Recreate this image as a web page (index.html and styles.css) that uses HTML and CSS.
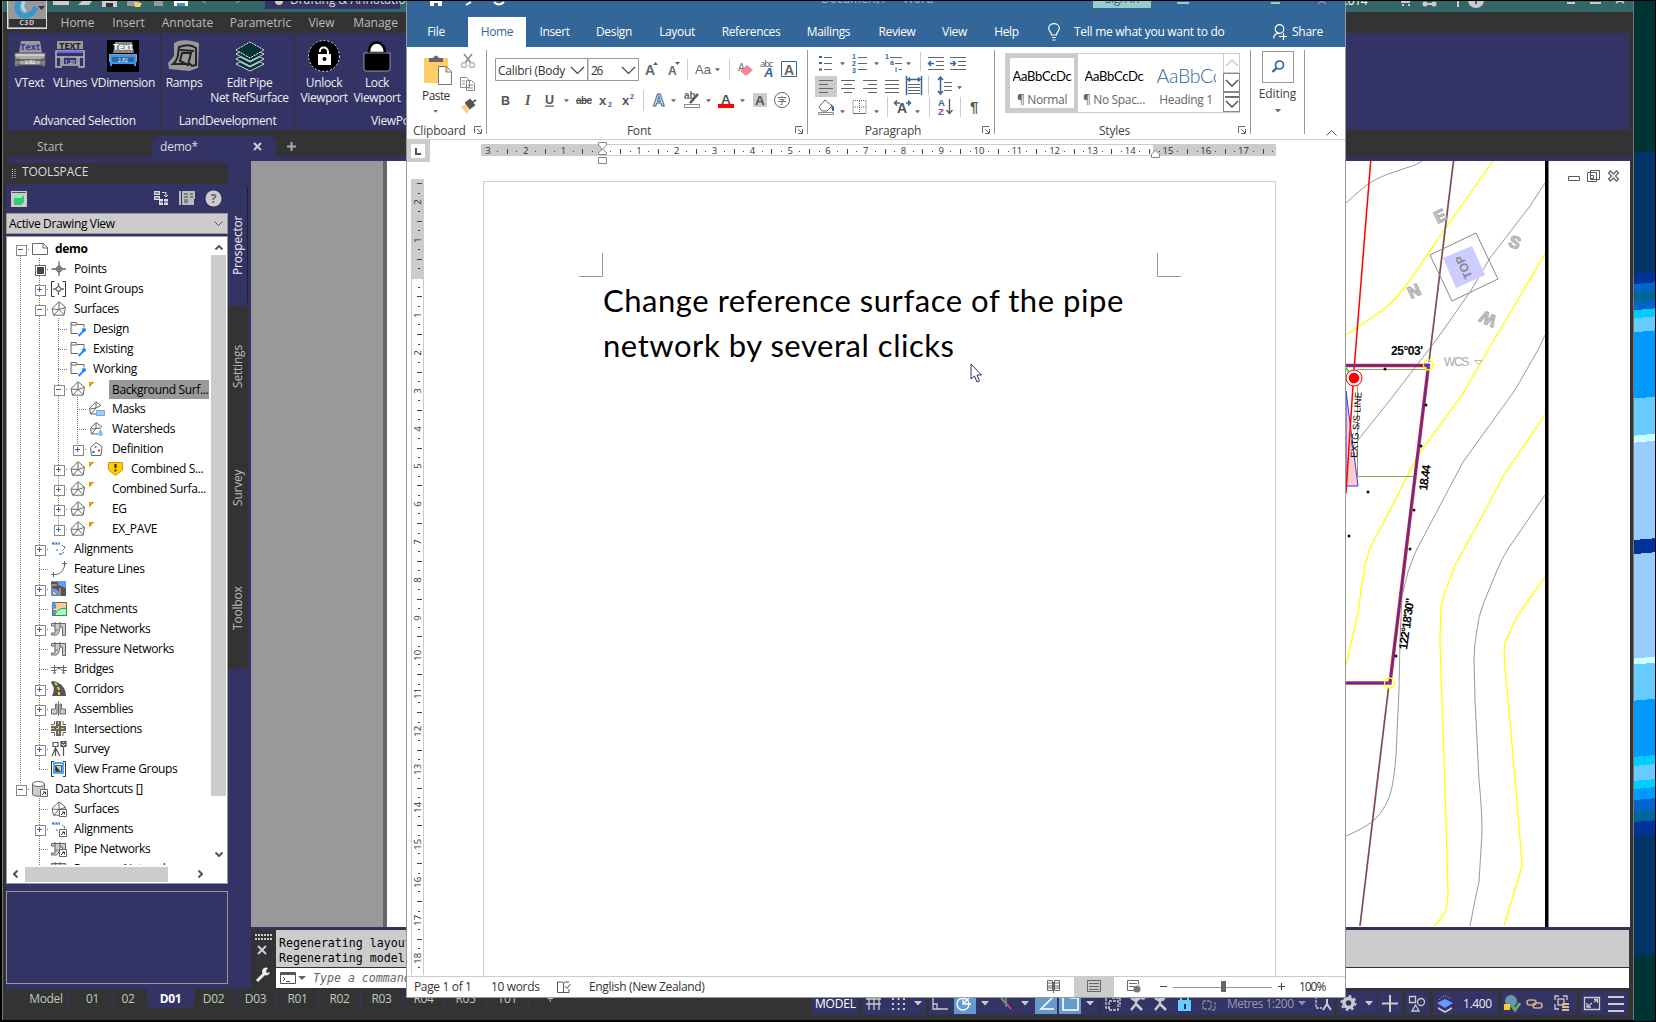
FILE: index.html
```html
<!DOCTYPE html>
<html lang="en">
<head>
<meta charset="utf-8">
<title>Document1 - Word</title>
<link rel="stylesheet" href="styles.css">
</head>
<body>
<svg class="defs" width="0" height="0">
  <defs>
    <symbol id="surf" viewBox="0 0 16 16"><path d="M1 7.500 8 .7l6.500 5.500-1.500 8H2.500zM8 1v7M1.500 8 8 8.500l6-2M8 8.500 3 14M8 8.500l5 5" fill="none" stroke="#666"/></symbol>
    <symbol id="folder" viewBox="0 0 16 16"><path d="M1 12.500v-11h5l1 2h7v3M1 12.500h7M1 4h6" fill="none" stroke="#666"/><path d="m8.500 15 5-5" stroke="#1a8cff" stroke-width="2"/><circle cx="14" cy="9" r="2" fill="#1a8cff"/></symbol>
    <symbol id="doc" viewBox="0 0 16 16"><path d="M.5 2.500h11l4 4v7H.5zM11 2.500V7h4.500" fill="#fff" stroke="#666"/></symbol>
    <symbol id="point" viewBox="0 0 16 16"><path d="M8 .5v4M8 11v4M.5 8h4M11 8h4M8 4.500 11.500 8 8 11.500 4.500 8zM6 8h4M8 6v4" fill="none" stroke="#666" stroke-width="1.300"/></symbol>
    <symbol id="pgroup" viewBox="0 0 16 16"><path d="M3.500.5h-3v15h3M11.500.5h3v15h-3" fill="none" stroke="#333"/><path d="M7.500 2v3M7.500 11v3M2 8h3M10 8h3M7.500 5l3 3-3 3-3-3z" fill="none" stroke="#666" stroke-width="1.300"/></symbol>
    <symbol id="mask" viewBox="0 0 16 16"><path d="M.5 7.500 7 .8l5 4M.5 7.500 1.500 13H7M7 1v6M1 8l6-1 4-2M7 7l-5 6" fill="none" stroke="#666"/><path d="M7.500 9.500h8v5h-8z" fill="#9cf" stroke="#369" stroke-dasharray="1 1"/></symbol>
    <symbol id="water" viewBox="0 0 16 16"><path d="M1.500 7.500 7 1.500l6 4.500M1.500 7.500 2.500 13H9M7 2v5M2 8l10-1M7 7l-4 6" fill="none" stroke="#666"/><path d="M11.500 8c4 5 2 7 0 7s-4-2 0-7z" fill="#69c9ff"/></symbol>
    <symbol id="defn" viewBox="0 0 16 16"><path d="M1.500 6.500 7 1.500l6 4-1 9H2.500z" fill="none" stroke="#666"/><path d="M5.500 5h2v2h-2z" fill="#3b6"/><path d="M3.500 10h2v2h-2z" fill="#06f"/><path d="M9 8.500h2v2H9z" fill="#c33"/></symbol>
    <symbol id="align" viewBox="0 0 16 16"><path d="M1 2.500h2M5 2.500h1M8 2.500h1" stroke="#666" stroke-width="2"/><path d="M4 1v3M7 1v3M13 5l1 2M13 11l-4 3" stroke="#1a8cff"/><path d="m11 4 3 3-3 3M8 13h2M5 9h2" fill="none" stroke="#666" stroke-dasharray="2 1"/></symbol>
    <symbol id="feat" viewBox="0 0 16 16"><path d="M2.500 11v5M0 13.500h5c5-1 8-4 9-11M11 2.500h5M13.500 0v5" fill="none" stroke="#666"/></symbol>
    <symbol id="sites" viewBox="0 0 16 16"><path d="M0 0h15v15H0z" fill="#69f"/><path d="M0 1h7v3l8 3v8H9L7 9 1 7z" fill="#555"/><path d="M1 9l6 5H3l-2-3z" fill="#fff" stroke="#666"/><path d="M1 4h5M9 7v7" stroke="#fc3"/></symbol>
    <symbol id="catch" viewBox="0 0 16 16"><path d="M1.500 1.500h14v13h-14z" fill="#fc9" stroke="#666"/><path d="M4 14.500c1-5 5-8 11.500-7v7z" fill="#9fc" stroke="#393"/><path d="M3 0c4 6 2 8 0 8s-4-2 0-8zM2 9h3v5H2z" fill="#59c"/></symbol>
    <symbol id="pipe" viewBox="0 0 16 16"><path d="M.5 2.500h14v12h-3V6H9c-1 6-2 7.500-4 8H.5v-2H4V5H.5z" fill="#ccc" stroke="#666"/><path d="M4 1v4M9 1v5M4 9h3" stroke="#666"/></symbol>
    <symbol id="bridge" viewBox="0 0 16 16"><path d="M0 6.500h16M0 9.500h5l2-2h2l2 2h5M3.500 4v8M12.500 4v8M2 12h3M11 12h3" fill="none" stroke="#666"/></symbol>
    <symbol id="corr" viewBox="0 0 16 16"><path d="M1 0c9 1 14 7 14 15H1C4 9 3 5 0 2z" fill="#555"/><path d="m4 2 2 2M7 6l1 3M8 11v3" stroke="#fc3" stroke-width="2"/></symbol>
    <symbol id="assy" viewBox="0 0 16 16"><path d="M7.500 0v15M.5 8h4V3H6v10H.5zM14.500 8h-4V3H9v10h5.500z" fill="#ccc" stroke="#666"/></symbol>
    <symbol id="inter" viewBox="0 0 16 16"><path d="M5 0h5v5h5v5h-5v5H5v-5H0V5h5z" fill="#666"/><path d="M7.500 0v15M0 7.500h15" stroke="#fc3" stroke-dasharray="3 2"/><path d="M3.500 0v3.500H0M12 0v3.500h3M3.500 15v-3.500H0M12 15v-3.500h3" fill="none" stroke="#666"/></symbol>
    <symbol id="survey" viewBox="0 0 16 16"><path d="M2 1.500h5v4H2zM4.500 5v4M4.500 7 1 15M4.500 7v8M4.500 7 9 15M10 .5h5v5h-5zM10 .5l5 5M15 .5l-5 5M12.500 6v9" fill="none" stroke="#555" stroke-width="1.200"/></symbol>
    <symbol id="vfg" viewBox="0 0 16 16"><path d="M3 .5H.5v15H3M12 .5h2.500v15H12" fill="none" stroke="#333"/><path d="M3 2h9v10H3z" fill="#fff" stroke="#1a8cff" stroke-width="1.500"/><path d="M4.500 4.500h6v6h-6z" fill="#ccc" stroke="#555"/><path d="M5 10V5l4 5z" fill="#333"/></symbol>
    <symbol id="short" viewBox="0 0 16 16"><path d="M8.500 8.500h7v7h-7z" fill="#fff" stroke="#666"/><path d="M11 11h2.500v2.500M13 11l-3 3" fill="none" stroke="#333"/></symbol>
    <symbol id="db" viewBox="0 0 16 16"><path d="M.5 3v10c0 3 12 3 12 0V3" fill="#ccc" stroke="#666"/><ellipse cx="6.500" cy="3" rx="6" ry="2.500" fill="#fff" stroke="#666"/></symbol>
    <symbol id="launch" viewBox="0 0 8 8"><path d="M.5 7V.5H7M7.500 3v4.500H3M3 3l4 4" fill="none" stroke="#666"/></symbol>
    <symbol id="dd" viewBox="0 0 6 4"><path d="M0 0h6L3 3.500z" fill="#666"/></symbol>
    <symbol id="ddl" viewBox="0 0 8 5"><path d="M0 0h8L4 4.500z" fill="#ccc"/></symbol>
  </defs>
</svg>

<div class="desktop">
  <div class="wallpaper"></div>

  <section class="cad">
    <header class="cad-title">
      <svg width="400" height="11" viewBox="0 1 400 11"><path d="M53 1h16v4H53zM78 5l4-4h10l-3 4z" fill="#ccc"/><path d="M102 1h15v6h-15z" fill="#ccc"/><path d="M106 3h7v4h-7z" fill="#333"/><path d="M127 1h12v5h-12zM154 1h9v5h-9z" fill="#999"/><path d="m134 2 8 1-2 4h-5z" fill="#fc6"/><path d="M174 1h14v5h-14z" fill="#fff"/><path d="M177 3h8v3h-8z" fill="#39c"/><path d="m202 1 4 2M240 1l-4 2" stroke="#99c"/><path d="M265 1h135v8H265z" fill="#336"/><circle cx="279" cy="1" r="4" fill="#ccc"/></svg>
      <span class="wsname">Drafting &amp; Annotation</span>
      <span class="user">.014</span>
      <svg class="cad-right" width="234" height="11" viewBox="1396 1 234 11"><path d="M1398 2h9M1399 5h2M1405 5h2M1421 4h11M1455 1v6M1564 3h8M1587 3h11" stroke="#ccc" stroke-width="2"/><circle cx="1422" cy="4" r="2.500" fill="#ccc"/><circle cx="1431" cy="4" r="2.500" fill="#ccc"/><circle cx="1473" cy="0" r="8" fill="#ccc"/><path d="M1472 1h2v3h-2z" fill="#366"/><path d="m1613 3 4-3 4 3" fill="none" stroke="#ccc" stroke-width="2"/></svg>
    </header>
    <div class="logo"><svg width="39" height="27" viewBox="0 0 39 27"><path d="M10 0c-2 8-1 14 7 15 6 0 9-4 11-9" fill="none" stroke="#39c" stroke-width="5"/><path d="M16 0c-2 5-2 9 2 10" fill="none" stroke="#9df" stroke-width="3"/><path d="M30 5h7l-3.500 4z" fill="#333"/><path d="M1 18h37v8H1z" fill="#333"/></svg><b>C3D</b></div>
    <nav class="cad-tabs"><span>Home</span><span>Insert</span><span>Annotate</span><span>Parametric</span><span>View</span><span>Manage</span></nav>
    <div class="cad-ribbon">
      <div class="panel p1">
        <div class="tools">
          <div class="tool"><svg width="32" height="32" viewBox="0 0 32 32"><path d="M7 1h19l2 12H5z" fill="#999"/><text x="16" y="10" class="ic" fill="#339">Text</text><path d="M1 13h30v7H1zM1 19h4v7H1zM27 19h4v7h-4zM3 20h26v5H3z" fill="#aaa" stroke="#555"/><path d="M1 15h30" stroke="#eee"/><text x="16" y="24" class="num">2.82</text></svg><span>VText</span></div>
          <div class="tool"><svg width="32" height="32" viewBox="0 0 32 32"><path d="M3 1h26v8H3z" fill="#999"/><text x="16" y="9" class="ic" fill="#222">TEXT</text><path d="M2 11h28v6H2zM2 17h5v10H2zM25 17h5v10h-5zM9 17h14v8H9z" fill="#336" stroke="#bbb" stroke-width="1.500"/><path d="M3 12h26" stroke="#66f" stroke-width="2"/><text x="16" y="24" class="num">1.20</text></svg><span>VLines</span></div>
          <div class="tool"><svg width="32" height="32" viewBox="0 0 32 32"><path d="M0 0h32v32H0z" fill="#000"/><path d="M8 2h17l2 11H6z" fill="#888"/><text x="16" y="10" class="ic" fill="#fff">Text</text><path d="M2 14h28v8H2z" fill="#999"/><path d="M4 16h24v7H4zM4 20v6M28 20v6" fill="#369" stroke="#39f" stroke-width="2"/><text x="16" y="22" class="num">2.82</text></svg><span>VDimension</span></div>
        </div>
        <h4>Advanced Selection</h4>
      </div>
      <div class="panel p2">
        <div class="tools">
          <div class="tool"><svg width="34" height="32" viewBox="0 0 34 32"><path d="M7 3C15-1 22 0 32 3l-1 25-9 3-20-2-1-6 6-7z" fill="#999"/><path d="M12 7c8-3 13-2 17 1v17l-4 1-2-2H6c6-5 5-11 6-17zM15 13h9l-3 12-8-4zM13 10l14 1" fill="none" stroke="#222" stroke-width="2"/></svg><span>Ramps</span></div>
          <div class="tool"><svg width="32" height="32" viewBox="0 0 32 32"><g fill="#033" stroke="#fff" stroke-width=".8"><path d="m2 24 14 7 14-7-4-2-10 5-10-5z"/><path d="m2 19 14 7 14-7-4-2-10 5-10-5z"/><path d="m2 14 14 7 14-7-4-2-10 5-10-5z"/></g><path d="M2 10 16 2l14 8-14 8z" fill="#033" stroke="#fff" stroke-dasharray="2 1"/></svg><span>Edit Pipe<br>Net RefSurface</span></div>
        </div>
        <h4>LandDevelopment</h4>
      </div>
      <div class="panel p3">
        <div class="tools">
          <div class="tool"><svg width="32" height="32" viewBox="0 0 32 32"><circle cx="16" cy="16" r="15.500" fill="#000" stroke="#ddd" stroke-dasharray="2 2"/><path d="M10 14h13v11H10z" fill="#fff"/><path d="M12 12c-1-6 8-6 8 0v3" fill="none" stroke="#fff" stroke-width="2"/><circle cx="16.500" cy="19" r="2" fill="#000"/></svg><span>Unlock<br>Viewport</span></div>
          <div class="tool"><svg width="32" height="32" viewBox="0 0 32 32"><path d="M8 13C7-1 24-1 24 13z" fill="#fff" stroke="#000" stroke-width="2.500"/><path d="M3 13h26v16q0 2-2 2H5q-2 0-2-2z" fill="#000" stroke="#ccc" stroke-width=".7"/></svg><span>Lock<br>Viewport</span></div>
        </div>
        <h4>ViewPorts</h4>
      </div>
    </div>
    <div class="files"><span class="start">Start</span><span class="demo">demo*<i><svg width="9" height="9" viewBox="0 0 9 9"><path d="m1 1 7 7M8 1 1 8" stroke="#ccc" stroke-width="2"/></svg></i></span><span class="plus"><svg width="9" height="9" viewBox="0 0 9 9"><path d="M4.500 0v9M0 4.500h9" stroke="#aaa" stroke-width="2"/></svg></span></div>
    <main class="cad-main">
      <aside class="space">
        <div class="space-body">
          <div class="space-head"><svg width="4" height="10" viewBox="0 0 4 10"><path d="M.5 0v10M3 0v10" stroke="#ccc" stroke-dasharray="1 1"/></svg>TOOLSPACE</div>
          <div class="space-tools">
            <svg width="16" height="16" viewBox="0 0 16 16"><path d="M0 0h16v16H0z" fill="#ccc"/><path d="M1 1.500h14" stroke="#555"/><path d="m3 7 3-3h7v7l-3 3H3z" fill="#3c7"/><path d="m3 7 3-3h7l-3 3z" fill="#7fa"/></svg>
            <i></i>
            <svg width="15" height="15" viewBox="0 0 15 15"><path d="M0 0h6v4H0zM0 5h6v4H0zM5 8h4v6H5zM10 8h4v6h-4z" fill="#ddd"/><path d="M8 1.500h4V6M10 4l2 2 2-2" fill="none" stroke="#ddd"/><path d="M1 2h4M1 7h4M6 11h8" stroke="#336"/></svg>
            <svg width="16" height="15" viewBox="0 0 16 15"><path d="M0 0h2v14H0zM3 0h13v8h-1v6H3z" fill="#bbb"/><path d="M5 3h4M11 3h3M5 6h4M11 6h3M5 9h4M5 11h4" stroke="#444"/></svg>
            <svg width="17" height="17" viewBox="0 0 17 17"><circle cx="8.500" cy="8.500" r="8" fill="#ccc"/><text x="8.500" y="13" class="q">?</text></svg>
          </div>
          <div class="combo">Active Drawing View<svg width="9" height="6" viewBox="0 0 9 6"><path d="m.5.5 4 4 4-4" fill="none" stroke="#555"/></svg></div>
          <div class="treebox">
            <div class="tree">
              <svg class="guides" width="80" height="628" viewBox="7 237 80 628"><path d="M20.500 256v527M39.500 258v511M39.500 798v67M58.500 318v210M77.500 397v52" fill="none" stroke="#777" stroke-dasharray="1 1"/></svg>
              <ul>
                <li class="l0"><i class="minus"></i><svg><use href="#doc"/></svg><b>demo</b></li>
                <li class="l1"><i class="sq"></i><svg><use href="#point"/></svg>Points</li>
                <li class="l1"><i class="plus"></i><svg><use href="#pgroup"/></svg>Point Groups</li>
                <li class="l1"><i class="minus"></i><svg><use href="#surf"/></svg>Surfaces</li>
                <li class="l2"><i></i><svg><use href="#folder"/></svg>Design</li>
                <li class="l2"><i></i><svg><use href="#folder"/></svg>Existing</li>
                <li class="l2"><i></i><svg><use href="#folder"/></svg>Working</li>
                <li class="l2"><i class="minus"></i><svg><use href="#surf"/></svg><em></em><span class="sel">Background Surf...</span></li>
                <li class="l3"><i></i><svg><use href="#mask"/></svg>Masks</li>
                <li class="l3"><i></i><svg><use href="#water"/></svg>Watersheds</li>
                <li class="l3"><i class="plus"></i><svg><use href="#defn"/></svg>Definition</li>
                <li class="l2"><i class="plus"></i><svg><use href="#surf"/></svg><em></em><svg class="warn" viewBox="0 0 16 16"><path d="M.5 1.500h14V9L7.500 14.500.5 9z" fill="#fc0" stroke="#c90"/><path d="M7.500 3v4M7.500 8.500v2" stroke="#222" stroke-width="2"/></svg>Combined S...</li>
                <li class="l2"><i class="plus"></i><svg><use href="#surf"/></svg><em></em>Combined Surfa...</li>
                <li class="l2"><i class="plus"></i><svg><use href="#surf"/></svg><em></em>EG</li>
                <li class="l2"><i class="plus"></i><svg><use href="#surf"/></svg><em></em>EX_PAVE</li>
                <li class="l1"><i class="plus"></i><svg><use href="#align"/></svg>Alignments</li>
                <li class="l1"><i></i><svg><use href="#feat"/></svg>Feature Lines</li>
                <li class="l1"><i class="plus"></i><svg><use href="#sites"/></svg>Sites</li>
                <li class="l1"><i></i><svg><use href="#catch"/></svg>Catchments</li>
                <li class="l1"><i class="plus"></i><svg><use href="#pipe"/></svg>Pipe Networks</li>
                <li class="l1"><i></i><svg><use href="#pipe"/></svg>Pressure Networks</li>
                <li class="l1"><i></i><svg><use href="#bridge"/></svg>Bridges</li>
                <li class="l1"><i class="plus"></i><svg><use href="#corr"/></svg>Corridors</li>
                <li class="l1"><i class="plus"></i><svg><use href="#assy"/></svg>Assemblies</li>
                <li class="l1"><i></i><svg><use href="#inter"/></svg>Intersections</li>
                <li class="l1"><i class="plus"></i><svg><use href="#survey"/></svg>Survey</li>
                <li class="l1"><i></i><svg><use href="#vfg"/></svg>View Frame Groups</li>
                <li class="l0"><i class="minus"></i><svg><use href="#db"/><use href="#short"/></svg>Data Shortcuts []</li>
                <li class="l1"><i></i><svg><use href="#surf"/><use href="#short"/></svg>Surfaces</li>
                <li class="l1"><i class="plus"></i><svg><use href="#align"/><use href="#short"/></svg>Alignments</li>
                <li class="l1"><i></i><svg><use href="#pipe"/><use href="#short"/></svg>Pipe Networks</li>
                <li class="l1"><i></i><svg><use href="#pipe"/></svg>Pressure Networks</li>
              </ul>
            </div>
            <div class="vscroll"><svg width="8" height="5" viewBox="0 0 8 5"><path d="m.5 4.500 3.500-3.500 3.500 3.500" fill="none" stroke="#555" stroke-width="2"/></svg><b></b><svg width="8" height="5" viewBox="0 0 8 5"><path d="m.5.5 3.500 3.500L7.500.5" fill="none" stroke="#555" stroke-width="2"/></svg></div>
            <div class="hscroll"><svg width="5" height="8" viewBox="0 0 5 8"><path d="M4.500.5 1 4l3.500 3.500" fill="none" stroke="#555" stroke-width="2"/></svg><b></b><svg width="5" height="8" viewBox="0 0 5 8"><path d="M.5.500 4 4 .5 7.500" fill="none" stroke="#555" stroke-width="2"/></svg></div>
          </div>
          <div class="preview"></div>
        </div>
        <div class="side"><span class="on">Prospector</span><span>Settings</span><span>Survey</span><span>Toolbox</span></div>
      </aside>
      <div class="work">
        <svg class="map" width="1379" height="766" viewBox="251 161 1379 766">
          <path d="M251 161h132v766H251z" fill="#999"/><path d="M383 161h4v766h-4z" fill="#666"/>
          <g fill="none" stroke="#999">
            <path d="M1346 203q11-10 22-19 9-6 20-10l27-9 7-4"/>
            <path d="M1545 183l-15 23-40 52-20 34-33 47-47 61-44 55"/>
            <path d="M1545 335l-7 15-23 40-52 72-48 91-7 19-6 24-2 44-1 50-3 65q-2 27-6 40-8 22-24 31-10 6-20 10"/>
            <path d="M1545 495l-35 51q-7 10-12 22l-14 34q-6 15-7 28-3 15-3 30l1 40 4 80q3 30 3 53l-3 49-4 18-5 26"/>
          </g>
          <g fill="none" stroke="#ff0" stroke-width="1.300">
            <path d="M1493 161l-48 68-40 58q-10 13-22 23l-37 25"/>
            <path d="M1545 254l-57 96q-14 25-28 48l-42 57-28 55-20 38-5 17-4 25-3 23-12 52"/>
            <path d="M1545 415l-40 58-25 47-25 45-8 22q-5 11-6 23l-1 30 2 60 3 90 3 100q0 19-6 27-3 4-8 9"/>
            <path d="M1545 577l-27 38-13 27-1 13 4 45 8 90 6 72-1 8-17 56"/>
          </g>
          <path d="M1453.500 161 1429 362M1388.500 688l-28.500 238" stroke="#6cc" stroke-width="2"/><path d="M1453.500 161 1429 362M1388.500 688l-28.500 238" stroke="#a33" stroke-width="1.300"/>
          <path d="M1357.500 476V369.500H1426M1357.500 476.500h57" fill="none" stroke="#996"/>
          <path d="M1346 391l12 95h-12z" fill="#fcc" stroke="#33f"/>
          <path d="m1346 368 4 5" stroke="#0f0" stroke-width="2"/>
          <path d="M1370.700 161 1354 370l-8 123" fill="none" stroke="#f00" stroke-width="1.500"/>
          <path d="M1346 365.500h82.500L1390 683h-44" fill="none" stroke="#d22" stroke-width="3.400"/><path d="M1346 365.500h82.500L1390 683h-44" fill="none" stroke="#33c" stroke-width="1.400"/>
          <circle cx="1354" cy="378" r="8" fill="#fff" stroke="#f00"/><circle cx="1354" cy="378" r="5.300" fill="#f00"/>
          <g fill="none" stroke="#ff0" stroke-width="1.300"><circle cx="1428.500" cy="365" r="5"/><circle cx="1389.500" cy="683" r="5"/></g>
          <path d="M1424 364h5v5M1387 683h5" fill="none" stroke="#36f"/>
          <g fill="#111"><circle cx="1385" cy="369" r="1.500"/><circle cx="1426" cy="405" r="1.500"/><circle cx="1421" cy="446" r="1.500"/><circle cx="1368" cy="492" r="1.500"/><circle cx="1414" cy="510" r="1.500"/><circle cx="1349" cy="536" r="1.500"/><circle cx="1410" cy="549" r="1.500"/><circle cx="1396" cy="656" r="1.500"/></g>
          <path d="M1545 161h3.500v766h-3.500z" fill="#000"/>
          <g class="cadtext">
            <text x="1391" y="354.500" textLength="32">25°03'</text>
            <text transform="translate(1427 491)rotate(-82)" textLength="26">18.44</text>
            <text transform="translate(1407 650)rotate(-82)" textLength="52">122°18'30"</text>
            <text class="thin" transform="translate(1357 458)rotate(-86)" textLength="66">EXTG S/S LINE</text>
          </g>
          <path d="m1476 233 22 46-46 22-22-46z" fill="none" stroke="#888"/><path d="m1472 246 13 29-29 13-13-30z" fill="#ccf"/>
          <g class="cube"><text transform="translate(1464 267)rotate(-115)" y="4" class="top">TOP</text><text transform="translate(1440 216)rotate(-25)" y="6">E</text><text transform="translate(1515 242)rotate(20)" y="6">S</text><text transform="translate(1414 291)rotate(-25)" y="6">N</text><text transform="translate(1488 319)rotate(205)" y="6">W</text></g>
          <text x="1444" y="366" class="wcs" textLength="25">WCS</text><path d="M1474.500 360.500h8l-4 4z" fill="none" stroke="#bbb"/>
          <g fill="#fff" stroke="#555"><path d="M1568.500 176.500h11v4h-11z"/><path d="M1590.500 170.500h9v9h-9zM1587.500 172.500h9v9h-9zM1590.500 175.500h3v3h-3z"/></g><path d="m1609 171.500 9 9M1618 171.500l-9 9" stroke="#666" stroke-width="4"/><path d="m1610 172.500 7 7M1617 172.500l-7 7" stroke="#fff" stroke-width="1.500"/>
        </svg>
        <div class="cmd">
          <svg width="25" height="60" viewBox="251 929 25 60"><path d="M255 935h17M255 939h17" stroke="#ccc" stroke-width="2" stroke-dasharray="2 1"/><path d="m258 946 8 8M266 946l-8 8" stroke="#ccd" stroke-width="2"/><path d="m257 981 8-8" stroke="#eee" stroke-width="3"/><path d="M268 968a4 4 0 1 0 2 4l-3 1-1-2z" fill="#eee"/></svg>
          <div class="cmdtext"><div class="log">Regenerating layout.<br>Regenerating model.</div><div class="type"><svg width="26" height="13" viewBox="0 0 26 13"><path d="M.5.5h15v11H.5z" fill="#fff" stroke="#555"/><path d="M0 2h16" stroke="#555" stroke-width="2"/><path d="m3 5 2 2-2 2M6 9.500h4" fill="none" stroke="#555"/><path d="M18 4h8l-4 4z" fill="#666"/></svg>Type a command</div></div>
        </div>
      </div>
    </main>
    <footer class="status">
      <div class="layouts"><span>Model</span><span>01</span><span>02</span><span class="on">D01</span><span>D02</span><span>D03</span><span>R01</span><span>R02</span><span>R03</span><span>R04</span><span>R05</span><span>T01</span><span>+</span></div>
      <svg class="statusicons" width="818" height="24" viewBox="811 991 818 24">
        <path d="M812 991h47v24h-47zM862 991h64v24h-64zM929 991h170v24h-170zM1101 991h233v24h-233zM1337 991h40v24h-40zM1378 991h24v24h-24zM1405 991h24v24h-24zM1433 991h65v24h-65zM1501 991h76v24h-76zM1580 991h48v24h-48z" fill="#336"/>
        <path d="M954 991h22v23h-22zM1035 991h22v23h-22zM1059 991h22v23h-22z" fill="#69c"/>
        <text x="815" y="1008" fill="#fff" textLength="41">MODEL</text>
        <g fill="none" stroke="#ccc" stroke-width="1.300">
          <path d="M866 999h15M866 1004h15M869 996v14M874 996v14M879 996v14"/>
          <path d="M892 999h13M892 1004h13M892 1009h13" stroke-width="2" stroke-dasharray="2 3.500"/>
          <path d="M933 996v13h15M933 1004h4v5" />
          <circle cx="963" cy="1004" r="6" stroke="#fff"/><path d="M963 997v7h8M963 1004l6-6" stroke="#fff"/>
          <path d="M1001 998l4 5M1006 997v10" stroke="#3c9"/><path d="m1000 996 11 13" stroke="#e56"/>
          <path d="M1053 997l-12 12h13M1063 998v12h15v-12h-8" stroke="#fff" stroke-width="1.600"/>
          <path d="M1106 998v10h4M1109 1001h9v9h-9zM1112 998h8v9" stroke-dasharray="3 1"/>
          <path d="m1131 1010 5-6 6 6M1136 996v8M1131 998l5 3 4-3M1155 1010l5-6 6 6M1160 996v8M1155 998l5 3 4-3" stroke-width="2.600"/>
          <circle cx="1143" cy="997" r="2"/><path d="m1166 996-3 5"/>
          <path d="M1203 1001h8v8h-8zM1215 1002v8h-4" stroke="#889" stroke-dasharray="3 1"/>
          <path d="M1316 996v12h6M1321 997h5" stroke-dasharray="3 1"/><path d="m1323 1010 4-6 4 6M1327 999v5" stroke-width="2"/>
          <path d="M1390 995v17M1382 1003.500h16" stroke-width="2"/>
          <path d="M1409.500 996.500h6v6h-6zM1412 1011l3.500-6 3.500 6z"/><circle cx="1421" cy="1002" r="3.500"/>
          <path d="M1584.500 997.500h15v12h-15zM1588 1006l4-3M1597 1000l-3 2M1587 1003v4h4M1594 999.500h3.500v3.500" /><path d="M1608 997h16M1608 1004h16M1608 1011h16" stroke-width="2"/>
          <path d="M1555 1000v-4h4M1563 996h4v4M1555 1004v5h4"/><rect x="1558" y="999" width="6" height="6"/>
        </g>
        <path d="M1178 1000h13v11h-13z" fill="#6cf"/><path d="M1181 1000v-3q3.500-4 7 0v3" fill="none" stroke="#6cf" stroke-width="2"/><path d="M1184 1004h2v5h-2z" fill="#036"/>
        <text x="1227" y="1008" fill="#99a" textLength="67">Metres 1:200</text>
        <g><circle cx="1348.500" cy="1003" r="4.500" fill="none" stroke="#ccc" stroke-width="3.500"/><circle cx="1348.500" cy="1003" r="7" fill="none" stroke="#ccc" stroke-width="2" stroke-dasharray="2.700 2.800"/></g>
        <path d="m1437 1003 8-4 8 4-8 5z" fill="#69f"/><path d="m1438 1007 7 4 7-4v2l-7 4-7-4z" fill="#ccc"/><path d="M1439 1000q6-8 12 0" fill="none" stroke="#ccc" stroke-dasharray="1 1.500"/>
        <text x="1463" y="1008" fill="#eee" textLength="29">1.400</text>
        <circle cx="1511" cy="1001" r="6" fill="#69a"/><path d="M1504 1004h6v6h-6z" fill="#fc3"/><path d="m1512 1006 3 4 5-7" fill="none" stroke="#6a6" stroke-width="3"/>
        <g fill="none" stroke="#ca8" stroke-width="1.600"><rect x="1527" y="1000" width="9" height="5" rx="2.500"/><rect x="1533" y="1003" width="9" height="5" rx="2.500"/></g>
        <path d="M1562 1004h7M1562 1007h7M1562 1010h7" stroke="#db8" stroke-width="1.800"/>
        <use href="#ddl" x="914" y="1001" width="8" height="5"/><use href="#ddl" x="981" y="1001" width="8" height="5"/><use href="#ddl" x="1021" y="1001" width="8" height="5"/><use href="#ddl" x="1086" y="1001" width="8" height="5"/><use href="#ddl" x="1298" y="1001" width="8" height="5" opacity=".6"/><use href="#ddl" x="1365" y="1001" width="8" height="5"/>
      </svg>
    </footer>
  </section>

  <section class="word">
    <header class="wtop">
      <div class="wtitle">
        <svg width="130" height="9" viewBox="407 1 130 9"><path d="M430 1h12v5h-12z" fill="#fff"/><path d="M434 3h4v3h-4z" fill="#369"/><path d="M466 5l5-3M494 2q5 5 10 0" stroke="#fff" stroke-width="2" fill="none"/></svg>
        <span class="dname">Document1 &nbsp;-&nbsp; Word</span><span class="signin">Sign in</span>
        <svg class="wbtn" width="180" height="9" viewBox="1160 1 180 9"><path d="M1177 3h12M1271 3h9" stroke="#9cc" stroke-width="2"/><path d="m1318 4 4-3 4 3" stroke="#c9c" fill="none"/></svg>
      </div>
      <nav class="wtabs"><span>File</span><span class="on">Home</span><span>Insert</span><span>Design</span><span>Layout</span><span>References</span><span>Mailings</span><span>Review</span><span>View</span><span>Help</span>
        <span class="tell"><svg width="12" height="18" viewBox="0 0 12 18"><path d="M3.500 12C3.500 9 .7 8 .7 5.500c0-6.400 10.600-6.400 10.600 0C11.300 8 8.500 9 8.500 12zM4 14.500h4M4.500 17h3" fill="none" stroke="#fff" stroke-width="1.200"/></svg>Tell me what you want to do</span>
        <span class="share"><svg width="15" height="16" viewBox="0 0 15 16"><circle cx="6.500" cy="5" r="4.300" fill="none" stroke="#fff" stroke-width="1.200"/><path d="M.6 14.500Q1 9 6.500 9.400M6 12.500h8M10.500 9v7" fill="none" stroke="#fff" stroke-width="1.200"/></svg>Share</span>
      </nav>
    </header>
    <div class="wribbon">
      <div class="group g1">
        <svg width="79" height="68" viewBox="407 50 79 68">
          <path d="M424 58h24v25h-24z" fill="#fc6"/><path d="M429 62v-4h4q3-5 6 0h4v4z" fill="#666"/><path d="M438.500 66.500h8l5 5v13h-13zM446 67v5h5" fill="#fff" stroke="#777"/>
          <path d="m464 54 7 9M472 54l-7 9" stroke="#888" stroke-width="1.600"/><g fill="none" stroke="#bbb" stroke-width="1.500"><circle cx="464" cy="65" r="2.500"/><circle cx="472" cy="65" r="2.500"/></g>
          <path d="M460.500 77.500h6l3 3v7h-9zM466.500 80.500h5l3 3v7h-8zM468 85h5M468 88h5M462 81h3M462 84h3" fill="#fff" stroke="#888"/>
          <path d="m461 107 5-3 4 5-3 5z" fill="#fc9"/><path d="m466 103 4 5 4-3-4-5zM471 103l5-3" fill="#555" stroke="#555" stroke-width="2"/>
          <text x="422" y="100" textLength="28">Paste</text><use href="#dd" x="433" y="110" width="5" height="3"/>
        </svg>
        <h5>Clipboard<svg width="8" height="8"><use href="#launch"/></svg></h5>
      </div>
      <div class="group g2">
        <svg width="321" height="68" viewBox="487 50 321 68">
          <g fill="#fff" stroke="#999"><path d="M495.500 58.500h92v22h-92zM588 58.500h50.500v22H588z"/></g>
          <text x="498" y="74.500" textLength="67">Calibri (Body</text><text x="591" y="74.500" textLength="12">26</text>
          <path d="m571 67 6.500 6.500L584 67M622 67l6.500 6.500L635 67" fill="none" stroke="#444" stroke-width="1.200"/>
          <g class="b" fill="#666"><text x="645" y="75" font-size="14">A</text><text x="668" y="75" font-size="12">A</text><text x="695" y="74" font-size="13" font-weight="400">Aa</text></g>
          <path d="m653 65 2.500-3 2.500 3zM675 62h5l-2.500 3z" fill="#369"/>
          <path d="M687.500 59v21M729.500 59v21M643.500 90v21" stroke="#ccc"/>
          <use href="#dd" x="715" y="68" width="5" height="4"/><use href="#dd" x="564" y="99" width="5" height="4"/><use href="#dd" x="671" y="99" width="5" height="4"/><use href="#dd" x="706" y="99" width="5" height="4"/><use href="#dd" x="740" y="99" width="5" height="4"/>
          <text x="738" y="71" font-size="11" fill="#666">A</text><path d="m740 71 7-6 6 5-7 6z" fill="#e89"/>
          <text x="760" y="67" font-size="9.500" fill="#555" textLength="13">abc</text><text x="764" y="77" font-size="13" class="b" font-style="italic" fill="#369">A</text>
          <path d="M781.500 61.500h15v15h-15z" fill="#fff" stroke="#369"/><text x="784" y="74.500" font-size="14" class="b" fill="#666">A</text>
          <g fill="#555"><text x="501" y="104.500" font-size="12.500" class="b">B</text><text x="525" y="104.500" font-size="14" font-family="Liberation Serif" font-style="italic" font-weight="700">I</text><text x="545" y="104" font-size="12.500" class="b">U</text><path d="M545 105.500h9v1.200h-9z"/><text x="576" y="104" font-size="10" class="b" textLength="16">abc</text><path d="M576 100h16v1h-16z"/><text x="599" y="104.500" font-size="13" class="b">x</text><text x="622" y="104.500" font-size="13" class="b">x</text></g>
          <g fill="#369" class="b" font-size="7"><text x="608" y="107">2</text><text x="630" y="99">2</text></g>
          <text x="653" y="105.500" font-size="16" class="b" fill="#fff" stroke="#369">A</text>
          <text x="684" y="99" font-size="10" class="b" fill="#666">ab</text><path d="M690 103l8-9" stroke="#555" stroke-width="2.500"/><path d="M684.500 104.500h15v3h-15z" fill="#fff" stroke="#888"/>
          <text x="721" y="104" font-size="13.500" class="b" fill="#555">A</text><path d="M718 104h16v4h-16z" fill="#f00"/>
          <path d="M753 93h14v14h-14z" fill="#ccc"/><text x="755" y="105" font-size="13.500" class="b" fill="#555">A</text>
          <circle cx="782" cy="100" r="7.500" fill="none" stroke="#666"/><text x="777.500" y="103.500" font-size="9" font-family="Noto Sans CJK SC" fill="#555">字</text>
        </svg>
        <h5>Font<svg width="8" height="8"><use href="#launch"/></svg></h5>
      </div>
      <div class="group g3">
        <svg width="186" height="68" viewBox="809 50 186 68">
          <path d="M816 76h22v21h-22z" fill="#ccc"/>
          <g stroke="#369" stroke-width="2"><path d="M820 57h3M820 63h3M820 69.500h3"/></g>
          <g stroke="#666" fill="none"><path d="M825 57.500h8M825 63.500h8M825 69.500h8M859 57.500h9M859 63.500h9M859 69.500h9M891 57.500h12M896 63.500h7M900 69.500h3M929 57.500h16M937 61.500h8M937 65.500h8M929 69.500h16M951 57.500h16M959 61.500h8M959 65.500h8M951 69.500h16"/>
          <path d="M820 80.500h14M820 84.500h9M820 88.500h14M820 92.500h9M842 80.500h14M845 84.500h8M842 88.500h14M845 92.500h8M864 80.500h14M869 84.500h9M864 88.500h14M869 92.500h9M886 80.500h14M886 84.500h14M886 88.500h14M886 92.500h14M909 84.500h12M909 87.500h12M909 90.500h12M909 93.500h12M945 82.500h8M945 86.500h8M945 90.500h8"/><path d="M854 100.500h13v13h-13zM854 107h13M860.500 101v13" stroke-dasharray="1 1"/><path d="M854 113.500h13"/></g>
          <g class="b" fill="#369" font-size="7"><text x="853" y="59">1</text><text x="853" y="66">2</text><text x="853" y="73">3</text><text x="886" y="59">1</text><text x="891" y="65">a</text><text x="896" y="72">i</text></g>
          <g stroke="#369" fill="none" stroke-width="1.500"><path d="M935 63.500h-5M932 61l-2.500 2.500L932 66M951 63.500h5M954 61l2.500 2.500L954 66M907.500 76v19M922.500 76v19M909 79.500h11M911 77.500l-2 2 2 2M919 77.500l2 2-2 2M941.500 77v17M939 80l2.500-3 2.500 3M939 91l2.500 3 2.500-3"/></g>
          <path d="m820 107 6-7 7 6-5 5h-5z" fill="#fff" stroke="#666"/><path d="m832 104 3 3v4h-2z" fill="#369"/><path d="M819.500 112.500h15v2h-15z" fill="#fff" stroke="#888"/>
          <text x="898" y="113" font-size="14" class="b" fill="#555">A</text><path d="M901 103h-5M898 100.500l-2.500 2.500 2.500 2.500M907 103h4M909 100.500l2.500 2.500-2.500 2.500" fill="none" stroke="#369" stroke-width="1.500"/>
          <text x="939" y="106" font-size="9.500" class="b" fill="#369">A</text><text x="939" y="114.500" font-size="9.500" class="b" fill="#84a">Z</text><path d="M950.500 99v14M947.500 110l3 3.500 3-3.500" fill="none" stroke="#555" stroke-width="1.300"/>
          <text x="971" y="112" font-size="15" class="b" fill="#555">¶</text>
          <path d="M921.500 52v19M929.500 76v19M888.500 97v20M930.500 97v20M961.500 97v20" stroke="#ccc"/>
          <use href="#dd" x="841" y="62" width="5" height="4"/><use href="#dd" x="875" y="62" width="5" height="4"/><use href="#dd" x="907" y="62" width="5" height="4"/><use href="#dd" x="958" y="86" width="5" height="4"/><use href="#dd" x="841" y="110" width="5" height="4"/><use href="#dd" x="875" y="110" width="5" height="4"/><use href="#dd" x="916" y="110" width="5" height="4"/>
        </svg>
        <h5>Paragraph<svg width="8" height="8"><use href="#launch"/></svg></h5>
      </div>
      <div class="group g4">
        <div class="gallery">
          <div class="style sel"><p>AaBbCcDc</p><small>¶ Normal</small></div>
          <div class="style"><p>AaBbCcDc</p><small>¶ No Spac...</small></div>
          <div class="style h"><p>AaBbCc</p><small>Heading 1</small></div>
          <div class="gbtns"><i><svg width="14" height="8" viewBox="0 0 14 8"><path d="m1 7 6-6 6 6" fill="none" stroke="#ccc" stroke-width="1.500"/></svg></i><i><svg width="14" height="8" viewBox="0 0 14 8"><path d="m1 1 6 6 6-6" fill="none" stroke="#444" stroke-width="1.300"/></svg></i><i><svg width="14" height="12" viewBox="0 0 14 12"><path d="M0 1h14M1 5l6 6 6-6" fill="none" stroke="#444" stroke-width="1.300"/></svg></i></div>
        </div>
        <h5>Styles<svg width="8" height="8"><use href="#launch"/></svg></h5>
      </div>
      <div class="group g5">
        <div class="find"><svg width="14" height="14" viewBox="0 0 14 14"><circle cx="8.500" cy="5" r="4" fill="none" stroke="#369" stroke-width="1.700"/><path d="m5.500 8-4 4" stroke="#369" stroke-width="2.400"/></svg></div>
        <span>Editing</span><svg width="6" height="4"><use href="#dd"/></svg>
      </div>
      <svg class="collapse" width="11" height="6" viewBox="0 0 11 6"><path d="m.5 5.500 5-5 5 5" fill="none" stroke="#555"/></svg>
    </div>
    <div class="hruler">
      <div class="tabsel"><svg width="14" height="14" viewBox="0 0 14 14"><path d="M0 0h14v14H0z" fill="#fff"/><path d="M5 4v6h5" fill="none" stroke="#555" stroke-width="2"/></svg></div>
      <div class="hr"><div class="hcells"><b>3</b><b>2</b><b>1</b><b></b><b>1</b><b>2</b><b>3</b><b>4</b><b>5</b><b>6</b><b>7</b><b>8</b><b>9</b><b>10</b><b>11</b><b>12</b><b>13</b><b>14</b><b>15</b><b>16</b><b>17</b><b></b></div>
        <svg class="ind" width="9" height="22" viewBox="0 0 9 22"><path d="M.5.5h8V3l-4 4.500L.5 3zM.5 12.500V11l4-4 4 4v1.500zM.5 15.500h8v6h-8z" fill="#fff" stroke="#888"/></svg>
        <svg class="indr" width="9" height="8" viewBox="0 0 9 8"><path d="M.5 7.500V4l4-3.500 4 3.500v3.500z" fill="#fff" stroke="#888"/></svg>
      </div>
    </div>
    <div class="wdoc">
      <div class="vr"><div class="vcells"><b>2</b><b>1</b><b></b><b>1</b><b>2</b><b>3</b><b>4</b><b>5</b><b>6</b><b>7</b><b>8</b><b>9</b><b>10</b><b>11</b><b>12</b><b>13</b><b>14</b><b>15</b><b>16</b><b>17</b><b>18</b></div></div>
      <article class="page">
        <div class="marks"><i></i><i></i></div>
        <p>Change reference surface of the pipe<br>network by several clicks</p>
      </article>
    </div>
    <footer class="wstatus">
      <span class="pg">Page 1 of 1</span><span class="wc">10 words</span>
      <svg width="14" height="13" viewBox="0 0 14 13"><path d="M6.500 2v9.500H.5V1h4q2 0 2 1.500Q7 1 9 1h3M6.500 11.500H12V8M8 5l2 2.500L13.500 3" fill="none" stroke="#555"/></svg>
      <span class="lang">English (New Zealand)</span>
      <svg class="views" width="290" height="20" viewBox="1048 976 290 20"><path d="M1074 976h40v20h-40z" fill="#ccc"/><path d="M1047.500 979.500h5v10h-5zM1053.500 981v11M1054.500 979.500h5v10h-5zM1048 982h11M1048 985h11M1048 987h11M1087.500 979.500h13v11h-13zM1089 982.500h10M1089 985.500h10M1089 988.500h10M1138 989.500h-10.500v-10h11v4M1129 982.500h8M1129 985.500h5" fill="none" stroke="#666"/><circle cx="1137" cy="988" r="3.500" fill="#777"/><path d="M1160 985.500h7M1278 985.500h7M1281.500 982v7" stroke="#444"/><path d="M1173 986.500h99" stroke="#999"/><path d="M1221 980h5v11h-5z" fill="#666"/><text x="1299" y="989.500" textLength="27">100%</text></svg>
    </footer>
  </section>
  <svg class="cursor" width="13" height="21" viewBox="0 0 13 21"><path d="M1 1v15l3.500-3 2.500 6 2.500-1-2.500-6h4.500z" fill="#fff" stroke="#336"/></svg>
</div>
</body>
</html>
```
FILE: styles.css
```css
* { box-sizing: border-box; }
body { margin: 0; background: #000; font: 12px/14px "Open Sans", "Noto Sans", sans-serif; letter-spacing: -.35px; color: #000; }
svg { display: block; flex: none; }
.defs { position: absolute; }
ul, h4, h5, p { margin: 0; padding: 0; font-weight: 400; font-size: inherit; }
i, em { font-style: normal; }
.desktop { position: relative; width: 1656px; height: 1022px; overflow: hidden; display: flex; background: #000; }
.desktop span, .desktop h4, .desktop li { white-space: nowrap; }
.wallpaper { position: absolute; left: 1634px; top: 1px; width: 21px; height: 1020px;
  background: linear-gradient(175deg, #033 0 151px, #036 151px 272px, #039 272px 282px, #06c 282px 290px, #069 290px 300px, #06c 300px 308px, #0cf 308px 316px, #6cf 316px 330px, #09f 330px 396px, #6cf 396px 433px, #cff 433px 440px, #9cf 440px 537px, #039 537px 551px, #9cf 551px 655px, #cff 655px 661px, #6cf 661px 697px, #09f 697px 753px, #0cf 753px 762px, #6cf 762px 777px, #0cf 777px 785px, #09f 785px 796px, #06c 796px 808px, #069 808px 818px, #039 818px 832px, #036 832px 952px, #033 952px); }

/* Civil 3D window */
.cad { margin: 1px 0 0 2px; width: 1632px; height: 1019px; background: #333; border: solid #777; border-width: 0 1px; display: flex; flex-direction: column; position: relative; }
.cad-title { height: 11px; background: #366; display: flex; overflow: hidden; position: relative; }
.cad-title > svg:first-child { margin-left: -3px; }
.wsname { margin-left: -110px; margin-top: -8px; color: #ddd; letter-spacing: 0; }
.user { margin-left: auto; margin-top: -7px; color: #fff; width: 54px; }
.logo { position: absolute; left: 4px; top: 0; width: 40px; height: 28px; background: #999; border: 1px solid #ddd; border-top: 0; }
.logo b { position: absolute; left: 0; right: 0; top: 17px; text-align: center; color: #ccc; font: 700 7px/10px "Open Sans"; letter-spacing: .6px; }
.cad-tabs { height: 21px; padding-left: 48px; display: flex; color: #bbb; line-height: 21px; text-align: center; letter-spacing: 0; }
.cad-tabs span:nth-child(1) { width: 53px; } .cad-tabs span:nth-child(2) { width: 49px; } .cad-tabs span:nth-child(3) { width: 69px; } .cad-tabs span:nth-child(4) { width: 77px; } .cad-tabs span:nth-child(5) { width: 45px; } .cad-tabs span:nth-child(6) { width: 63px; }
.cad-ribbon { height: 97px; margin: 0 4px 0 5px; background: #336; display: flex; color: #eee; line-height: 15px; text-align: center; }
.panel { display: flex; flex-direction: column; border-right: 1px solid #333; padding-top: 7px; }
.tools { display: flex; height: 73px; }
.tool { display: flex; flex-direction: column; align-items: center; gap: 3px; }
.p1 { width: 153px; padding-left: 1px; } .p2 { width: 134px; } .p3 { width: 240px; border: 0; }
.p1 .tool { width: 40px; } .p1 .tool:nth-child(1) { width: 41px; } .p1 .tool:nth-child(3) { width: 66px; }
.p2 .tool:nth-child(1) { width: 46px; } .p2 .tool:nth-child(2) { width: 85px; }
.p3 .tool:nth-child(1) { width: 58px; } .p3 .tool:nth-child(2) { width: 48px; }
.panel h4 { height: 15px; }
.p3 h4 { text-align: left; padding-left: 76px; }
.ic { font: 700 9px "Open Sans"; text-anchor: middle; letter-spacing: 0; }
.num { font: 5px "Open Sans"; text-anchor: middle; fill: #fff; letter-spacing: 0; }
.q { font: 700 12px "Open Sans"; text-anchor: middle; fill: #666; }
.files { height: 27px; display: flex; color: #bbb; line-height: 34px; padding-left: 34px; }
.start { width: 115px; letter-spacing: -.1px; }
.demo { width: 124px; margin-top: 6px; height: 21px; line-height: 22px; background: #336; border-radius: 8px 8px 0 0; padding-left: 8px; display: flex; color: #ddd; letter-spacing: -.2px; }
.demo i { margin: 6px 0 0 55px; }
.files .plus { margin: 12px 0 0 11px; }
.cad-main { height: 832px; margin: 0 3px; background: #336; display: flex; }
.space { width: 245px; display: flex; padding-top: 6px; }
.space-body { width: 222px; display: flex; flex-direction: column; }
.space-head { height: 21px; background: #333; color: #ddd; display: flex; align-items: center; gap: 6px; padding-left: 6px; border-radius: 0 3px 0 0; letter-spacing: -.1px; padding-bottom: 4px; }
.space-head svg { margin-top: 4px; }
.space-tools { height: 29px; display: flex; align-items: center; padding: 0 6px 0 5px; gap: 10px; }
.space-tools i { flex: 1; }
.combo { height: 21px; background: #ccc; border: 1px solid #999; display: flex; align-items: center; justify-content: space-between; padding: 1px 4px 0 2px; }
.treebox { margin-top: 2px; height: 648px; background: #fff; border: 1px solid #999; display: grid; grid-template: 628px 18px / 203px 17px; }
.tree { grid-area: 1 / 1; overflow: hidden; position: relative; }
.guides { position: absolute; left: 0; top: 0; }
.tree ul { list-style: none; margin-top: 2px; position: relative; }
.tree li { height: 20px; display: flex; align-items: center; }
.tree li > svg { width: 16px; height: 16px; margin-right: 7px; }
.tree li.l0 { padding-left: 9px; } .tree li.l1 { padding-left: 28px; } .tree li.l2 { padding-left: 47px; } .tree li.l3 { padding-left: 66px; }
.tree li i { width: 16px; height: 9px; position: relative; flex: none; background: repeating-linear-gradient(90deg, #777 0 1px, transparent 1px 2px) 4px 4px / 9px 1px no-repeat; }
.tree li i::before { content: ""; position: absolute; inset: 0 auto auto 0; width: 9px; height: 9px; }
.tree li i.plus, .tree li i.minus, .tree li i.sq { background: repeating-linear-gradient(90deg, #777 0 1px, transparent 1px 2px) 10px 4px / 3px 1px no-repeat; }
.tree i.plus::before { border: 1px solid #888; background: linear-gradient(#369, #369) 1px 3px / 5px 1px no-repeat, linear-gradient(#369, #369) 3px 1px / 1px 5px no-repeat, #fff; }
.tree i.minus::before { border: 1px solid #888; background: linear-gradient(#369, #369) 1px 3px / 5px 1px no-repeat, #fff; }
.tree i.sq::before { border: 1px solid #666; background: #444; box-shadow: inset 0 0 0 1px #fff; }
.tree em { width: 12px; height: 14px; margin-left: -4px; margin-right: 11px; background: linear-gradient(135deg, #e90 0 4px, transparent 4px) no-repeat; }
.tree .warn { margin-left: -4px; }
.tree b { font-weight: 700; }
.sel { background: #999; padding: 0 1px 0 3px; margin-left: -3px; line-height: 19px; }
.vscroll { grid-area: 1 / 2; display: flex; flex-direction: column; align-items: center; padding: 8px 0 5px; }
.vscroll b { width: 15px; height: 541px; margin: 5px 0 56px -1px; background: #ccc; }
.hscroll { grid-area: 2 / 1 / 3 / 3; display: flex; align-items: center; padding-left: 6px; }
.hscroll b { width: 143px; height: 15px; background: #ccc; margin: 0 30px 0 7px; }
.preview { margin-top: 7px; height: 93px; border: 1px solid #999; }
.side { padding-top: 22px; width: 20px; display: flex; flex-direction: column; }
.side span { writing-mode: vertical-rl; transform: rotate(180deg); height: 121px; width: 20px; line-height: 20px; text-align: center; background: #333; color: #bbb; border-radius: 4px 0 0 4px; letter-spacing: -.2px; }
.side .on { background: #336; color: #eee; border-left: 1px solid #222; }
.work { flex: 1; padding-top: 4px; display: flex; flex-direction: column; }
.map { background: #fff; }
.cadtext { font: 700 12px "Liberation Sans", sans-serif; letter-spacing: 0; fill: #000; }
.cadtext .thin { font-size: 9.5px; font-weight: 400; }
.cube { font: 700 17px "Liberation Sans", sans-serif; fill: #ccc; stroke: #aaa; text-anchor: middle; letter-spacing: 0; }
.cube .top { font-size: 12px; fill: #888; stroke: none; }
.wcs { font: 12px "Liberation Sans", sans-serif; fill: #aaa; }
.cmd { height: 60px; display: flex; background: #333; margin-top: 2px; }
.cmdtext { flex: 1; padding: 1px 1px 1px 0; display: flex; flex-direction: column; font: 11.6px/15px "DejaVu Sans Mono", monospace; letter-spacing: 0; }
.log { height: 37px; background: #ccc; padding: 6px 3px 0; }
.type { height: 20px; margin-top: 1px; background: #fff; color: #666; font-style: italic; display: flex; align-items: center; padding-left: 4px; gap: 7px; }
.status { height: 30px; display: flex; }
.layouts { display: flex; color: #bcb; line-height: 20px; text-align: center; padding-left: 22px; height: 19px; }
.layouts span { width: 42px; border-right: 1px solid #336; }
.layouts span:nth-child(1) { width: 43px; margin-right: 4px; } .layouts span:nth-child(2) { width: 42px; margin-right: -6px; } .layouts span:nth-child(3) { width: 41px; } .layouts .on { background: #336; color: #fff; font-weight: 700; border-radius: 0 0 8px 8px; width: 48px; margin: 0 -2px; }
.layouts span:last-child { border: 0; }
.statusicons { margin: 2px 4px 0 auto; }
.statusicons text { font-size: 12px; letter-spacing: 0; }

/* Word window */
.word { position: absolute; left: 406px; top: 1px; width: 940px; height: 997px; background: #fff; border: solid #999; border-width: 0 1px 1px; display: flex; flex-direction: column; overflow: hidden; }
.wtop { height: 46px; background: #369; color: #fff; }
.wtitle { height: 16px; display: flex; }
.wtitle span { height: 12px; margin-top: -9px; line-height: 14px; }
.dname { margin-left: 284px; width: 165px; color: #9bd; letter-spacing: 0; }
.wtitle .signin { margin-left: 107px; width: 58px; background: #9cc; color: #369; text-align: center; height: 16px; }
.wbtn { margin-left: 9px; }
.wtabs { height: 30px; display: flex; line-height: 29px; text-align: center; }
.wtabs span { width: 57px; }
.wtabs .on { background: #fff; color: #369; width: 58px; }
.wtabs span:nth-child(1) { width: 58px; margin-right: 3px; }
.wtabs span:nth-child(4) { width: 62px; } .wtabs span:nth-child(5) { width: 64px; } .wtabs span:nth-child(6) { width: 84px; } .wtabs span:nth-child(7) { width: 71px; } .wtabs span:nth-child(8) { width: 66px; } .wtabs span:nth-child(9) { width: 49px; } .wtabs span:nth-child(10) { width: 55px; }
.wtabs .tell, .wtabs .share { display: flex; align-items: center; gap: 14px; width: 225px; padding: 0 0 1px 14px; margin: 0; letter-spacing: -.27px; }
.wtabs .share { gap: 4px; width: 60px; }
.wribbon { height: 93px; border-bottom: 1px solid #ccc; display: flex; padding-top: 3px; color: #444; }
.wribbon svg { font-size: 12px; fill: #333; }
.wribbon svg .b { font-weight: 700; font-family: "Liberation Sans", sans-serif; letter-spacing: 0; }
.group { height: 84px; border-right: 1px solid #999; display: flex; flex-direction: column; }
.group h5 { display: flex; justify-content: center; margin-top: 5px; height: 15px; flex: none; line-height: 15px; position: relative; letter-spacing: -.2px; }
.group h5 svg { position: absolute; right: 4px; bottom: 4px; }
.g1 { width: 80px; } .g1 h5 { justify-content: flex-start; padding-left: 6px; } .g2 { width: 321px; } .g2 h5 { padding-right: 16px; } .g3 { width: 187px; } .g3 h5 { padding-right: 16px; } .g4 { width: 256px; } .g4 h5 { padding-right: 26px; } .g5 { width: 54px; }
.g4 { padding: 3px 0 0 10px; }
.gallery { width: 235px; height: 60px; border: 1px solid #ccc; display: flex; margin-bottom: 5px; flex: none; }
.style { width: 72px; height: 58px; text-align: center; overflow: hidden; padding-top: 13px; }
.style.sel { border: 4px solid #ccc; padding: 9px 0 0; margin: 0; background: #fff; line-height: inherit; }
.style p { font: 13px/18px Lato, sans-serif; color: #000; letter-spacing: -.3px; margin: 0 auto; width: 59px; overflow: hidden; white-space: nowrap; }
.style.h p { font-size: 19.5px; color: #369; font-weight: 300; }
.style small { display: block; font-size: 12px; line-height: 16px; margin-top: 7px; color: #666; white-space: nowrap; }
.gbtns { margin: -1px -1px 0 auto; display: flex; flex-direction: column; width: 17px; }
.gbtns i { height: 20px; border: 1px solid #888; display: flex; align-items: center; justify-content: center; }
.gbtns i:first-child { border-color: #ccc; }
.g5 { align-items: center; }
.find { width: 32px; height: 32px; border: 1px solid #999; display: flex; align-items: center; justify-content: center; margin-top: 1px; }
.g5 span { margin: 4px 0 8px; letter-spacing: -.1px; }
.collapse { margin: 80px 0 0 21px; }
.hruler { height: 22px; display: flex; }
.tabsel { width: 23px; height: 22px; background: #ccc; padding: 4px 0 0 4px; }
.hr { margin: 4px 0 0 51px; width: 795px; height: 12px; position: relative; border: solid #ccc; border-width: 1px 0; background: linear-gradient(90deg, #ccc 0 121px, #fff 121px 672px, #ccc 672px); }
.hcells { width: 807px; height: 10px; overflow: hidden; display: flex; margin-left: -12px; clip-path: inset(0 0 0 13px); background:
  repeating-linear-gradient(90deg, #444 0 1px, transparent 1px 37.79px) 0 4px / auto 5px no-repeat,
  repeating-linear-gradient(90deg, transparent 0 9.5px, #444 9.5px 10.5px, transparent 10.5px 28px, #444 28px 29px, transparent 29px 37.79px) 0 6px / auto 1px no-repeat; }
.hcells b { width: 37.79px; flex: none; text-align: center; font: 9.5px/12px "Open Sans", sans-serif; color: #333; letter-spacing: 0; }
.ind { position: absolute; left: 117px; top: -3px; }
.indr { position: absolute; left: 670px; top: 5px; }
.wdoc { height: 814px; display: flex; align-items: flex-start; }
.vr { margin: 17px 0 0 4px; width: 13px; height: 796px; border: solid #ccc; border-width: 0 1px; overflow: hidden; background: linear-gradient(#ccc 0 100px, #fff 100px); }
.vcells { margin-top: 4px; width: 11px; display: flex; flex-direction: column; background:
  repeating-linear-gradient(#444 0 1px, transparent 1px 37.79px) 5px 0 / 5px auto no-repeat,
  repeating-linear-gradient(transparent 0 9.5px, #444 9.5px 10.5px, transparent 10.5px 28px, #444 28px 29px, transparent 29px 37.79px) 6px 0 / 2px auto no-repeat; }
.vcells b { height: 37.79px; flex: none; writing-mode: vertical-rl; transform: rotate(180deg); text-align: center; font: 9.5px/11px "Open Sans", sans-serif; color: #333; letter-spacing: 0; width: 11px; }
.page { margin: 19px 0 0 59px; width: 793px; height: 795px; border: 1px solid #ccc; border-bottom: 0; }
.marks { display: flex; justify-content: space-between; margin: 71px 94px 0 95px; }
.marks i { width: 24px; height: 24px; border: 1px solid #999; border-width: 0 1px 1px 0; }
.marks i + i { border-width: 0 0 1px 1px; }
.page p { margin: 1px 0 0 119px; font: 31px/45px Lato, sans-serif; letter-spacing: .54px; white-space: nowrap; }
.wstatus { height: 21px; border-top: 1px solid #ccc; display: flex; align-items: center; color: #333; padding: 0 7px 0 7px; }
.pg { width: 77px; } .wc { width: 66px; } .lang { margin-left: 18px; }
.wstatus .views { margin-left: auto; overflow: visible; }
.wstatus text { font-size: 12px; fill: #333; }
.cursor { position: absolute; left: 970px; top: 363px; }
```
